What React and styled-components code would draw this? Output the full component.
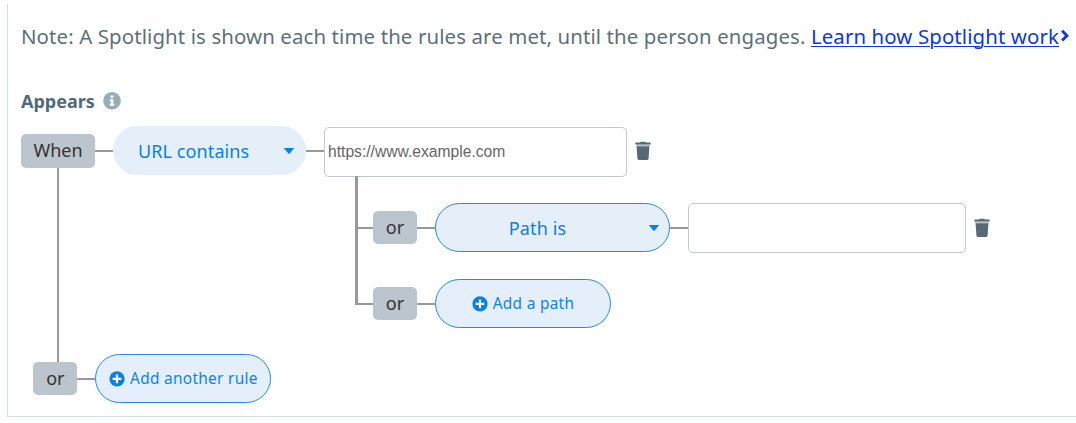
import React from 'react';
import styled, { createGlobalStyle } from 'styled-components';

const GlobalStyle = createGlobalStyle`
    *
    {
        box-sizing:border-box;
    }

    body
    {
        margin:0;
        background:#fff;
        font-family:'Noto Sans', 'Open Sans', sans-serif;
        overflow:hidden;
    }
`;

const Page = styled.main`
    height:423px;
    padding:4px 0 6px 7px;
`;

const Panel = styled.section`
    height:413px;
    padding:16px 0 0 13px;
    border-left:1px solid #d3dee6;
    border-bottom:1px solid #d3dee6;
`;

const Note = styled.p`
    display:flex;
    align-items:center;
    margin:0;
    height:32px;
    font-size:20.4px;
    letter-spacing:.12px;
    line-height:32px;
    white-space:pre;
    color:#5c707c;

    a
    {
        color:#0b38e0;
        text-decoration:underline;
        text-decoration-thickness:1px;
        text-underline-offset:2px;
    }
`;

const Heading = styled.h2`
    display:flex;
    align-items:center;
    gap:8px;
    height:26px;
    margin:36px 0 12px;
    font-size:18px;
    line-height:26px;
    color:#4f6b78;
`;

const RuleGroup = styled.div`
    display:flex;
    height:228px;
`;

const Trunk = styled.div`
    display:flex;
    flex-direction:column;
    align-items:center;
    width:74px;
    padding-top:8px;
`;

const TrunkLine = styled.div`
    flex:1;
    width:2.5px;
    margin-bottom:-8px;
    background:#999;
`;

const Badge = styled.span`
    flex:none;
    width:${ p => p.$width || 44 }px;
    height:33.5px;
    border-radius:5px;
    background:#bcc5cd;
    color:#333;
    font-size:18px;
    line-height:33px;
    text-align:center;
`;

const Row = styled.div`
    display:flex;
    align-items:flex-start;
    height:50px;

    ${ Badge }
    {
        margin-top:7.5px;
    }
`;

const Connector = styled.span`
    flex:none;
    width:${ p => p.$width || 18 }px;
    height:2px;
    margin-top:23.5px;
    background:#999;
`;

const Select = styled.button`
    display:flex;
    align-items:center;
    flex:none;
    width:${ p => p.$width }px;
    height:49px;
    padding:${ p => p.$outlined ? '0 9px 0 0' : '1px 11px 0 25px' };
    border:${ p => p.$outlined ? '1.5px solid #2588e3' : 'none' };
    border-radius:25px;
    background:#e5effa;
    color:#0a7fe5;
    font-family:inherit;
    font-size:18px;
    letter-spacing:.1px;

    span
    {
        flex:1;
        padding-right:${ p => p.$outlined ? '9px' : '0' };
        text-align:${ p => p.$outlined ? 'center' : 'left' };
    }
`;

const AddButton = styled.button`
    display:flex;
    align-items:center;
    justify-content:center;
    gap:5px;
    flex:none;
    width:176px;
    height:49px;
    padding:0;
    border:1.5px solid #2588e3;
    border-radius:25px;
    background:#e5effc;
    color:#0a84ea;
    font-family:inherit;
    font-size:15.4px;
    letter-spacing:.3px;
`;

const Input = styled.input`
    flex:none;
    width:${ p => p.$width }px;
    height:50px;
    margin:0;
    padding:0 3px;
    border:1.5px solid #c3c9d7;
    border-radius:5px;
    outline:none;
    background:#fff;
    color:#666;
    font-family:'Liberation Sans', Arial, sans-serif;
    font-size:15.65px;
`;

const DeleteButton = styled.button`
    display:flex;
    flex:none;
    margin:15px 0 0 8px;
    padding:0;
    border:none;
    background:none;
`;

const RootRow = styled( Row )`
    ${ Input }
    {
        margin-top:1px;
    }
`;

const Branches = styled.div`
    display:flex;
    margin-left:260px;
`;

const Rail = styled.div`
    width:3px;
    height:129px;
    background:#999;
`;

const BranchRows = styled.div`
    display:flex;
    flex-direction:column;
    gap:26px;
    padding-top:27px;
`;

const LastRow = styled( Row )`
    margin-left:12.4px;
`;

const InfoIcon = () => (
    <svg width="18" height="18" viewBox="0 0 18 18">
        <circle cx="9" cy="8.8" r="8.8" fill="#97abb9" />
        <path d="M7.6 3.5h2.8v2.4H7.6zM6.8 7.1h3.6v4.8h.9v1.8H6.8v-1.8h.9V8.9h-.9z" fill="#fff" />
    </svg>
);

const ChevronIcon = () => (
    <svg width="11" height="14" viewBox="0 0 11 14">
        <path d="M3.1 1.8 7.9 6.7l-4.8 4.9" fill="none" stroke="#0b38e0" strokeWidth="2.9" />
    </svg>
);

const CaretIcon = () => (
    <svg width="12" height="8" viewBox="0 0 12 8">
        <path d="M.8 1h10.4L6.7 6.6q-.7.7-1.4 0z" fill="#0a7fe5" />
    </svg>
);

const PlusIcon = () => (
    <svg width="16" height="16" viewBox="0 0 16 16">
        <circle cx="8" cy="7.8" r="7.6" fill="#0a7fe5" />
        <path d="M8 3.4v8.8M3.6 7.8h8.8" stroke="#fff" strokeWidth="2.2" />
    </svg>
);

const TrashIcon = () => (
    <svg width="16" height="20" viewBox="0 0 16 20">
        <path d="M1.2 3.4h13.6v2H1.2z" fill="#b6c1c8" />
        <path d="M.4 1.6h4.7L5.8.7h4.4l.7.9h4.7v2H.4z" fill="#566975" />
        <path d="M1.6 5.2h12.8l-.8 12.4q-.1 1.3-1.4 1.3H3.8q-1.3 0-1.4-1.3z" fill="#566975" />
    </svg>
);

function App ()
{
    return (
        <Page>
            <GlobalStyle />
            <Panel>
                <Note>
                    <span>Note: A Spotlight is shown each time the rules are met, until the person engages. </span>
                    <a href="#learn">Learn how Spotlight work</a>
                    <ChevronIcon />
                </Note>

                <Heading>
                    Appears
                    <InfoIcon />
                </Heading>

                <RuleGroup>
                    <Trunk>
                        <Badge $width={ 74 }>When</Badge>
                        <TrunkLine />
                    </Trunk>

                    <div>
                        <RootRow>
                            <Connector />
                            <Select $width={ 193 }>
                                <span>URL contains</span>
                                <CaretIcon />
                            </Select>
                            <Connector />
                            <Input $width={ 303 } defaultValue="https://www.example.com" />
                            <DeleteButton aria-label="Delete rule"><TrashIcon /></DeleteButton>
                        </RootRow>

                        <Branches>
                            <Rail />
                            <BranchRows>
                                <Row>
                                    <Connector $width={ 15 } />
                                    <Badge>or</Badge>
                                    <Connector />
                                    <Select $width={ 235 } $outlined>
                                        <span>Path is</span>
                                        <CaretIcon />
                                    </Select>
                                    <Connector />
                                    <Input $width={ 278 } />
                                    <DeleteButton aria-label="Delete path"><TrashIcon /></DeleteButton>
                                </Row>
                                <Row>
                                    <Connector $width={ 15 } />
                                    <Badge>or</Badge>
                                    <Connector />
                                    <AddButton><PlusIcon />Add a path</AddButton>
                                </Row>
                            </BranchRows>
                        </Branches>
                    </div>
                </RuleGroup>

                <LastRow>
                    <Badge>or</Badge>
                    <Connector />
                    <AddButton><PlusIcon />Add another rule</AddButton>
                </LastRow>
            </Panel>
        </Page>
    );
}

export default App;
